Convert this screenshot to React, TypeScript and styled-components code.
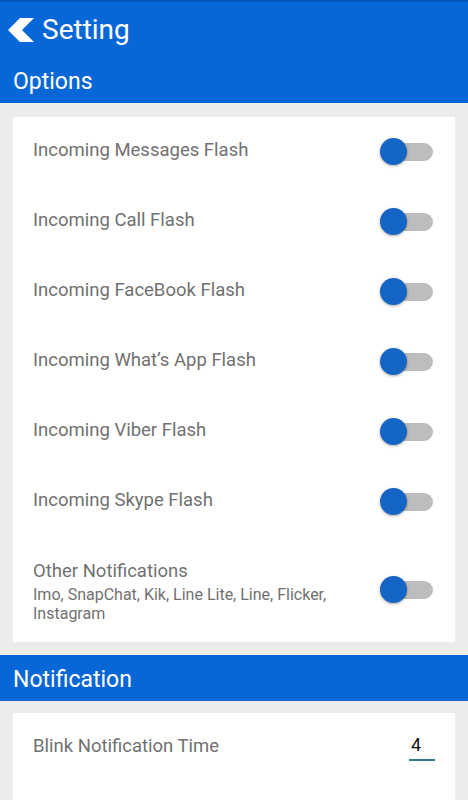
import React from "react";
import styled, { createGlobalStyle } from "styled-components";

const Global = createGlobalStyle`
  html, body { margin: 0; padding: 0; background: #ececec; }
  body { font-family: Roboto, "Noto Sans", "Liberation Sans", sans-serif; width: 468px; overflow: hidden; }
`;

const Page = styled.div`
  width: 468px;
  min-height: 800px;
  background: #ececec;
  display: flex;
  flex-direction: column;
`;

const Header = styled.header`
  background: #0867d7;
  border-top: 2px solid #0558bd;
  height: 101px;
  display: flex;
  flex-direction: column;
`;

const TitleRow = styled.div`
  display: flex;
  align-items: center;
  height: 56px;
  padding-left: 8px;
  gap: 8px;
`;

const Title = styled.h1`
  margin: 0;
  font-size: 28px;
  font-weight: 400;
  color: #ffffff;
  line-height: 1;
`;

const SectionBand = styled.div<{ $height: number }>`
  background: #0867d7;
  height: ${(p) => p.$height}px;
  display: flex;
  align-items: center;
  padding: 2px 0 0 13px;
  color: #ffffff;
  font-size: 23px;
  font-weight: 400;
  box-sizing: border-box;
`;

const Card = styled.div<{ $mt: number }>`
  background: #ffffff;
  margin: ${(p) => p.$mt}px 13px 0 13px;
  display: flex;
  flex-direction: column;
`;

const Row = styled.div<{ $h: number }>`
  height: ${(p) => p.$h}px;
  display: flex;
  align-items: center;
  justify-content: space-between;
  padding: 0 20px 0 20px;
`;

const TextBlock = styled.div`
  display: flex;
  flex-direction: column;
  padding-top: 8px;
`;

const Label = styled.div`
  font-size: 18.5px;
  color: #717171;
  line-height: 22px;
  margin-top: -4px;
`;

const Sub = styled.div`
  font-size: 16px;
  color: #717171;
  line-height: 18.5px;
  max-width: 300px;
  margin-top: 4px;
`;

const Toggle = styled.div`
  position: relative;
  width: 53px;
  height: 28px;
  flex-shrink: 0;
  margin-right: 2px;
`;

const Track = styled.div`
  position: absolute;
  right: 0;
  top: 5px;
  width: 46px;
  height: 18px;
  border-radius: 9px;
  background: #bdbdbd;
`;

const Thumb = styled.div`
  position: absolute;
  left: 0;
  top: 0;
  width: 27px;
  height: 27px;
  border-radius: 50%;
  background: #1565c4;
  box-shadow: 0 1px 3px rgba(0, 0, 0, 0.35);
`;

const NumberField = styled.div`
  width: 24px;
  border-bottom: 2px solid #2b7d8e;
  font-size: 18px;
  color: #111;
  padding: 0 0 4px 2px;
  margin-top: 0px;
  line-height: 20px;
`;

const Back = () => (
  <svg width="26" height="26" viewBox="0 0 26 26">
    <polygon points="0,13 12,1 26,1 14,13 26,25 12,25" fill="#ffffff" />
  </svg>
);

const Switch = () => (
  <Toggle>
    <Track />
    <Thumb />
  </Toggle>
);

const items = [
  "Incoming Messages Flash",
  "Incoming Call Flash",
  "Incoming FaceBook Flash",
  "Incoming What’s App Flash",
  "Incoming Viber Flash",
  "Incoming Skype Flash",
];

export default function App() {
  return (
    <Page>
      <Global />
      <Header>
        <TitleRow>
          <Back />
          <Title>Setting</Title>
        </TitleRow>
        <SectionBand $height={45}>Options</SectionBand>
      </Header>
      <Card $mt={14}>
        {items.map((t) => (
          <Row key={t} $h={70}>
            <Label>{t}</Label>
            <Switch />
          </Row>
        ))}
        <Row $h={105}>
          <TextBlock>
            <Label>Other Notifications</Label>
            <Sub>Imo, SnapChat, Kik, Line Lite, Line, Flicker, Instagram</Sub>
          </TextBlock>
          <Switch />
        </Row>
      </Card>
      <div style={{ height: 13 }} />
      <SectionBand $height={46}>Notification</SectionBand>
      <Card $mt={12}>
        <Row $h={70}>
          <Label>Blink Notification Time</Label>
          <NumberField>4</NumberField>
        </Row>
        <Row $h={40} />
      </Card>
    </Page>
  );
}
